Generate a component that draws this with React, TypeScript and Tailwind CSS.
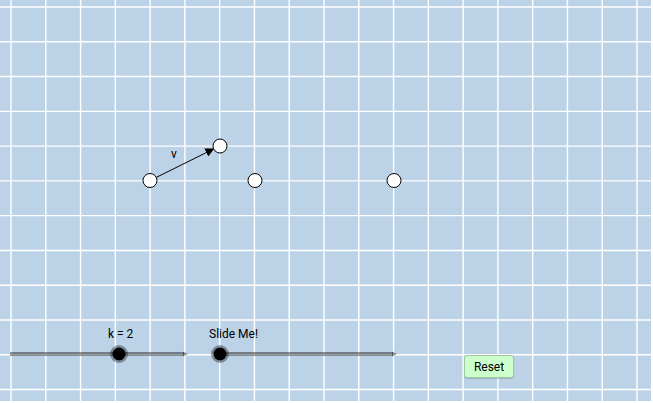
const STEP = 626 / 18
const xs = Array.from({ length: 20 }, (_, i) => 11 + i * STEP).filter((x) => x < 651)
const ys = Array.from({ length: 12 }, (_, i) => 7 + i * STEP).filter((y) => y < 401)

function Point({ x, y }: { x: number; y: number }) {
  return <circle cx={x} cy={y} r={7} fill="#ffffff" stroke="#000000" strokeWidth={1} />
}

function Slider({ x1, x2, y, knob }: { x1: number; x2: number; y: number; knob: number }) {
  return (
    <g>
      <line x1={x1} y1={y} x2={x2 - 4} y2={y} stroke="#000000" strokeOpacity={0.4} strokeWidth={4} />
      <path d={`M${x2 - 5} ${y - 2.5} L${x2} ${y} L${x2 - 5} ${y + 2.5} Z`} fill="#000000" fillOpacity={0.4} />
      <circle cx={knob} cy={y} r={9} fill="#000000" fillOpacity={0.35} />
      <circle cx={knob} cy={y} r={6.5} fill="#000000" />
    </g>
  )
}

export default function App() {
  return (
    <div className="w-[653px] h-[403px] bg-white">
      <div
        className="relative w-[651px] h-[401px] overflow-hidden bg-[#bcd3e7]"
        style={{ fontFamily: 'Roboto, "Liberation Sans", sans-serif' }}
      >
        <svg width="651" height="401" viewBox="0 0 651 401" className="absolute inset-0">
          {xs.map((x) => (
            <line key={`x${x}`} x1={x} y1={0} x2={x} y2={401} stroke="#ffffff" strokeWidth={1.4} />
          ))}
          {ys.map((y) => (
            <line key={`y${y}`} x1={0} y1={y} x2={651} y2={y} stroke="#ffffff" strokeWidth={1.4} />
          ))}

          <defs>
            <marker id="arrow" viewBox="0 0 10 10" refX="9" refY="5" markerWidth="9" markerHeight="9" markerUnits="userSpaceOnUse" orient="auto">
              <path d="M0 0 L10 5 L0 10 Z" fill="#000000" />
            </marker>
          </defs>
          <line x1={150} y1={180.5} x2={213.5} y2={149} stroke="#000000" strokeWidth={1} markerEnd="url(#arrow)" />

          <Point x={150} y={180.5} />
          <Point x={220} y={146} />
          <Point x={255} y={180.5} />
          <Point x={394} y={180.5} />

          <Slider x1={10} x2={188} y={354} knob={119} />
          <Slider x1={220} x2={397} y={354} knob={220} />
        </svg>

        <span className="absolute left-[171px] top-[148px] text-[12px] leading-none text-black">v</span>
        <span className="absolute left-[108px] top-[328px] text-[12px] leading-none text-black">k = 2</span>
        <span className="absolute left-[209px] top-[328px] text-[12px] leading-none text-black">Slide Me!</span>

        <button className="absolute left-[464px] top-[355px] w-[50px] h-[23px] rounded-[3px] border border-[#9fc79f] bg-[#ccffcc] text-[12px] text-black shadow-[0_1px_1px_rgba(0,0,0,0.15)]">
          Reset
        </button>
      </div>
    </div>
  )
}
